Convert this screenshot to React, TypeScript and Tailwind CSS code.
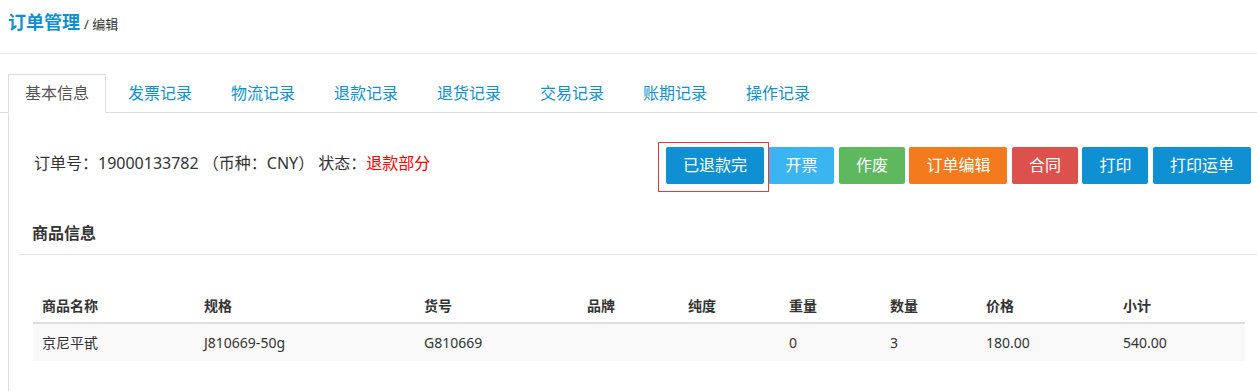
import React from "react";

const tabs = ["基本信息", "发票记录", "物流记录", "退款记录", "退货记录", "交易记录", "账期记录", "操作记录"];

const buttons: { label: string; cls: string }[] = [
  { label: "开票", cls: "bg-[#3bb4f2]" },
  { label: "作废", cls: "bg-[#5eb95e]" },
  { label: "订单编辑", cls: "bg-[#f37b1d]" },
  { label: "合同", cls: "bg-[#dd514c]" },
  { label: "打印", cls: "bg-[#0e90d2]" },
  { label: "打印运单", cls: "bg-[#0e90d2]" },
];

const cols: { title: string; w: string }[] = [
  { title: "商品名称", w: "w-[162px]" },
  { title: "规格", w: "w-[220px]" },
  { title: "货号", w: "w-[163px]" },
  { title: "品牌", w: "w-[101px]" },
  { title: "纯度", w: "w-[101px]" },
  { title: "重量", w: "w-[101px]" },
  { title: "数量", w: "w-[96px]" },
  { title: "价格", w: "w-[137px]" },
  { title: "小计", w: "w-[131px]" },
];

const row = ["京尼平甙", "J810669-50g", "G810669", "", "", "0", "3", "180.00", "540.00"];

export default function App() {
  return (
    <div
      className="w-[1257px] h-[391px] overflow-hidden bg-white text-[#333]"
      style={{ fontFamily: '"Noto Sans", "Noto Sans CJK SC", sans-serif' }}
    >
      {/* header */}
      <div className="h-[54px] border-b border-[#e8e8e8]">
        <div className="pt-[9px] pl-[8px] leading-[26px] flex items-baseline">
          <span className="text-[18px] font-bold text-[#0e90d2]">订单管理</span>
          <span className="text-[13px] text-[#333] ml-[4px]">/ 编辑</span>
        </div>
      </div>

      {/* tabs */}
      <ul className="mt-[20px] flex border-b border-[#ddd] pl-[8px]">
        {tabs.map((t, i) => (
          <li key={t} className="-mb-px mr-[5px]">
            <span
              className={
                "block px-[16px] py-[6px] leading-[25px] text-[16px] border " +
                (i === 0
                  ? "border-[#ddd] border-b-white bg-white text-[#555]"
                  : "border-transparent text-[#0e90d2]")
              }
            >
              {t}
            </span>
          </li>
        ))}
      </ul>

      {/* panel */}
      <div className="ml-[8px] border-l border-[#ddd] h-[300px]">
        <div className="pt-[34px] flex justify-between items-start pl-[25px] pr-[6px]">
          <div className="mt-[4px] leading-[24px] text-[16px] text-[#333]">
            订单号：19000133782 （币种：CNY） 状态：<span className="text-[#ff0000]">退款部分</span>
          </div>
          <div className="flex gap-[4.5px]">
            <div className="relative">
              <span className="block h-[37px] leading-[37px] px-[17px] text-[16px] text-white rounded-[2px] bg-[#0e90d2]">
                已退款完
              </span>
              <span className="absolute left-[-8px] top-[-5px] w-[111px] h-[50px] border border-[#e53a3a] pointer-events-none" />
            </div>
            {buttons.map((b) => (
              <span
                key={b.label}
                className={"block h-[37px] leading-[37px] px-[17px] text-[16px] text-white rounded-[2px] " + b.cls}
              >
                {b.label}
              </span>
            ))}
          </div>
        </div>

        <div className="mt-[37px] ml-[10px] pl-[13px] pb-[9px] border-b border-[#e5e5e5] leading-[24px] text-[16px] font-bold text-[#333]">
          商品信息
        </div>

        <table className="mt-[34px] ml-[24px] w-[1212px] table-fixed border-collapse text-[14px] text-[#333]">
          <thead>
            <tr className="border-b-2 border-[#ddd]">
              {cols.map((c) => (
                <th key={c.title} className={"h-[34px] pl-[9px] text-left font-bold leading-[20px] " + c.w}>
                  {c.title}
                </th>
              ))}
            </tr>
          </thead>
          <tbody>
            <tr className="bg-[#f9f9f9]">
              {row.map((v, i) => (
                <td key={i} className="h-[38px] pl-[9px] leading-[20px]">
                  {v}
                </td>
              ))}
            </tr>
          </tbody>
        </table>
      </div>
    </div>
  );
}
